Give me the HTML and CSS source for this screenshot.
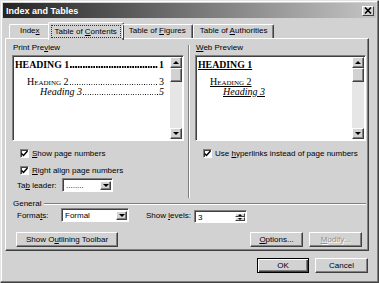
FILE: index.html
```html
<!DOCTYPE html>
<html lang="en">
<head>
    <meta charset="UTF-8">
    <title>Index and Tables</title>
    <link rel="stylesheet" href="styles.css">
</head>
<body>

<div class="dialog">
    <div class="titlebar">
        <span class="title">Index and Tables</span>
        <span class="close">
            <svg width="8" height="7" viewBox="0 0 8 7"><path d="M1 0.5 L7 6.5 M7 0.5 L1 6.5" stroke="#000" stroke-width="1.6"/></svg>
        </span>
    </div>

    <div class="tabs">
        <div class="tab first-tab">Inde<u>x</u></div>
        <div class="tab active"><span class="focus">Table of <u>C</u>ontents</span></div>
        <div class="tab">Table of <u>F</u>igures</div>
        <div class="tab">Table of <u>A</u>uthorities</div>
    </div>

    <div class="panel">
        <div class="columns">
            <div class="col">
                <div class="label">Print Pre<u>v</u>iew</div>
                <div class="preview">
                    <div class="doc">
                        <div class="entry h1"><span>HEADING 1</span><span class="leader"></span><span>1</span></div>
                        <div class="entry h2"><span>Heading 2</span><span class="leader"></span><span>3</span></div>
                        <div class="entry h3"><span>Heading 3</span><span class="leader"></span><span>5</span></div>
                    </div>
                    <div class="scrollbar">
                        <div class="sbtn"><span class="arrow-up"></span></div>
                        <div class="thumb"></div>
                        <div class="track"></div>
                        <div class="sbtn"><span class="arrow-down"></span></div>
                    </div>
                </div>
                <div class="check first">
                    <span class="box"><svg width="7" height="7" viewBox="0 0 7 7"><path d="M0.5 3.5 L2.5 5.5 L6.5 1" fill="none" stroke="#000" stroke-width="1.5"/></svg></span>
                    <span><u>S</u>how page numbers</span>
                </div>
                <div class="check">
                    <span class="box"><svg width="7" height="7" viewBox="0 0 7 7"><path d="M0.5 3.5 L2.5 5.5 L6.5 1" fill="none" stroke="#000" stroke-width="1.5"/></svg></span>
                    <span><u>R</u>ight align page numbers</span>
                </div>
                <div class="field-row leader-row">
                    <span class="field-label">Ta<u>b</u> leader:</span>
                    <div class="select leader-select">
                        <span class="value">........</span>
                        <span class="drop"><span class="arrow-down"></span></span>
                    </div>
                </div>
            </div>

            <div class="sep"></div>

            <div class="col">
                <div class="label"><u>W</u>eb Preview</div>
                <div class="preview">
                    <div class="doc web">
                        <div class="link h1">HEADING 1</div>
                        <div class="link h2">Heading 2</div>
                        <div class="link h3">Heading 3</div>
                    </div>
                    <div class="scrollbar">
                        <div class="sbtn"><span class="arrow-up"></span></div>
                        <div class="thumb"></div>
                        <div class="track"></div>
                        <div class="sbtn"><span class="arrow-down"></span></div>
                    </div>
                </div>
                <div class="check first">
                    <span class="box"><svg width="7" height="7" viewBox="0 0 7 7"><path d="M0.5 3.5 L2.5 5.5 L6.5 1" fill="none" stroke="#000" stroke-width="1.5"/></svg></span>
                    <span>Use <u>h</u>yperlinks instead of page numbers</span>
                </div>
            </div>
        </div>

        <div class="general">
            <span>General</span>
            <span class="rule"></span>
        </div>

        <div class="field-row formats-row">
            <span class="field-label formats-label">Forma<u>t</u>s:</span>
            <div class="select formats-select">
                <span class="value">Formal</span>
                <span class="drop"><span class="arrow-down"></span></span>
            </div>
            <span class="field-label levels-label">Show <u>l</u>evels:</span>
            <div class="spin">
                <span class="value">3</span>
                <span class="spin-btns">
                    <span class="spin-btn"><span class="arrow-up small"></span></span>
                    <span class="spin-btn"><span class="arrow-down small"></span></span>
                </span>
            </div>
        </div>

        <div class="button-row">
            <button class="btn outline-btn">Show O<u>u</u>tlining Toolbar</button>
            <button class="btn options-btn"><u>O</u>ptions...</button>
            <button class="btn disabled"><u>M</u>odify...</button>
        </div>
    </div>

    <div class="footer">
        <button class="btn default">OK</button>
        <button class="btn">Cancel</button>
    </div>
</div>

</body>
</html>
```

FILE: styles.css
```css
* {
    box-sizing: border-box;
}

body {
    margin: 0;
    font-family: 'Liberation Sans', Arial, sans-serif;
    font-size: 8px;
    color: #000;
    background-color: #fff;
}

.dialog {
    width: 379px;
    height: 283px;
    background-color: #d2d2d2;
    border: 1px solid;
    border-color: #e4e4e4 #404040 #404040 #e4e4e4;
    box-shadow: inset -1px -1px #808080, inset 1px 1px #fff;
    padding: 2px;
    display: flex;
    flex-direction: column;
}

/* title bar */
.titlebar {
    flex: none;
    height: 15px;
    background: linear-gradient(to right, #242424, #c4c4c4);
    display: flex;
    align-items: center;
    justify-content: space-between;
    padding: 0 2px 0 3px;
}

.title {
    color: #fff;
    font-weight: bold;
    font-size: 9px;
}

.close {
    width: 12px;
    height: 10px;
    background-color: #d2d2d2;
    border: 1px solid;
    border-color: #fff #404040 #404040 #fff;
    display: flex;
    align-items: center;
    justify-content: center;
}

/* tabs */
.tabs {
    flex: none;
    display: flex;
    align-items: flex-end;
    height: 16px;
    margin-top: 4px;
    padding-left: 6px;
    position: relative;
    z-index: 1;
}

.tab {
    height: 14px;
    line-height: 12px;
    padding: 0 6px;
    border: 1px solid;
    border-bottom: none;
    border-color: #fff #404040 #404040 #fff;
    border-radius: 2px 2px 0 0;
    box-shadow: inset -1px 0 #808080;
    white-space: nowrap;
}

.tab.first-tab {
    padding: 0 9px 0 10px;
}

.tab.active {
    height: 18px;
    margin: 0 -2px -2px;
    padding: 2px 2px 0;
    background-color: #d2d2d2;
}

.focus {
    display: inline-block;
    line-height: 11px;
    padding: 0 3px;
    border: 1px dotted #333;
}

/* panel */
.panel {
    flex: none;
    height: 213px;
    margin: 0 7px 0 2px;
    border: 1px solid;
    border-color: #fff #404040 #404040 #fff;
    box-shadow: inset -1px -1px #808080;
    padding: 4px 2px 3px 6px;
}

.columns {
    display: grid;
    grid-template-columns: 172px 11px 171px;
    height: 157px;
}

.sep {
    margin: 2px 0 2px 4px;
    width: 2px;
    border-left: 1px solid #808080;
    border-right: 1px solid #fff;
}

.label {
    height: 10px;
    line-height: 10px;
    padding-left: 1px;
    margin-bottom: 2px;
}

.preview {
    display: flex;
    height: 86px;
    background-color: #fff;
    border: 1px solid;
    border-color: #808080 #fff #fff #808080;
    box-shadow: inset 1px 1px #404040;
}

.doc {
    flex: 1;
    padding: 4px 6px 0 2px;
    font-family: 'Liberation Serif', 'Times New Roman', serif;
    font-size: 10px;
}

.entry {
    display: flex;
    align-items: baseline;
    white-space: nowrap;
    height: 10px;
    line-height: 10px;
}

.leader {
    flex: 1;
    height: 2px;
    margin: 0 1px;
    background-image: linear-gradient(to right, #000 1px, transparent 1px);
    background-size: 2.4px 1px;
    background-repeat: repeat-x;
    background-position: left bottom;
}

.h1 {
    font-weight: bold;
    height: 11px;
    margin-bottom: 6px;
}

.entry.h1 {
    font-size: 9.8px;
}

.entry.h1 .leader {
    background-image: linear-gradient(to right, #000 1.4px, transparent 1.4px);
    background-size: 2.6px 2px;
}

.h2 {
    padding-left: 12px;
    font-variant: small-caps;
}

.h3 {
    padding-left: 25px;
    font-style: italic;
}

.web .link {
    height: 10px;
    line-height: 10px;
    text-decoration: underline;
}

.web .h1 {
    height: 11px;
    font-size: 9.8px;
}

/* scrollbar */
.scrollbar {
    width: 12px;
    margin: 1px 1px 1px 0;
    display: flex;
    flex-direction: column;
    background-color: #e6e6e6;
}

.sbtn,
.thumb {
    height: 11px;
    background-color: #d2d2d2;
    border: 1px solid;
    border-color: #fff #404040 #404040 #fff;
    box-shadow: inset -1px -1px #808080;
    display: flex;
    align-items: center;
    justify-content: center;
}

.thumb {
    height: 14px;
}

.track {
    flex: 1;
}

.arrow-up,
.arrow-down {
    width: 0;
    height: 0;
    border-left: 3px solid transparent;
    border-right: 3px solid transparent;
}

.arrow-up {
    border-bottom: 3px solid #000;
}

.arrow-down {
    border-top: 3px solid #000;
}

.arrow-up.small,
.arrow-down.small {
    border-left-width: 2px;
    border-right-width: 2px;
    border-top-width: 2px;
    border-bottom-width: 2px;
}

.arrow-up.small {
    border-top: none;
}

.arrow-down.small {
    border-bottom: none;
}

/* checkboxes */
.check {
    display: flex;
    align-items: center;
    height: 12px;
    margin-top: 5px;
    padding-left: 8px;
    white-space: nowrap;
}

.check.first {
    margin-top: 6px;
}

.box {
    width: 9px;
    height: 9px;
    margin-right: 3px;
    background-color: #fff;
    border: 1px solid;
    border-color: #808080 #fff #fff #808080;
    box-shadow: inset 1px 1px #404040;
    display: flex;
    align-items: center;
    justify-content: center;
}

/* fields */
.field-row {
    display: flex;
    align-items: center;
    height: 14px;
    padding-left: 5px;
    white-space: nowrap;
}

.leader-row {
    margin-top: 2px;
}

.field-label {
    width: 45px;
}

.select,
.spin {
    display: flex;
    height: 14px;
    background-color: #fff;
    border: 1px solid;
    border-color: #808080 #fff #fff #808080;
    box-shadow: inset 1px 1px #404040;
    padding: 2px 1px 1px 2px;
}

.value {
    flex: 1;
    line-height: 9px;
    padding-left: 1px;
}

.drop {
    width: 11px;
    background-color: #d2d2d2;
    border: 1px solid;
    border-color: #fff #404040 #404040 #fff;
    box-shadow: inset -1px -1px #808080;
    display: flex;
    align-items: center;
    justify-content: center;
}

.leader-select {
    width: 51px;
}

.general {
    display: flex;
    align-items: center;
    height: 8px;
    line-height: 8px;
    padding-left: 1px;
}

.rule {
    flex: 1;
    height: 2px;
    margin-left: 3px;
    border-top: 1px solid #808080;
    border-bottom: 1px solid #fff;
}

.formats-label {
    width: 44px;
}

.formats-select {
    width: 68px;
}

.levels-label {
    width: 48px;
    margin-left: 17px;
}

.spin {
    width: 53px;
    height: 13px;
    margin-top: 2px;
}

.spin-btns {
    width: 10px;
    display: flex;
    flex-direction: column;
}

.spin-btn {
    flex: 1;
    background-color: #d2d2d2;
    border: 1px solid;
    border-color: #fff #404040 #404040 #fff;
    display: flex;
    align-items: center;
    justify-content: center;
}

/* buttons */
.button-row {
    display: flex;
    margin-top: 10px;
    padding: 0 4px;
}

.btn {
    height: 15px;
    width: 53px;
    padding: 0;
    font-family: inherit;
    font-size: 8px;
    color: #000;
    background-color: #d2d2d2;
    border: 1px solid;
    border-color: #fff #404040 #404040 #fff;
    box-shadow: inset -1px -1px #808080;
    white-space: nowrap;
}

.outline-btn {
    width: 102px;
}

.options-btn {
    margin-left: auto;
    margin-right: 6px;
}

.btn.disabled {
    color: #909090;
    text-shadow: 1px 1px #fff;
}

.footer {
    display: flex;
    justify-content: flex-end;
    gap: 6px;
    margin-top: 7px;
    padding-right: 8px;
}

.btn.default {
    width: 52px;
    border-color: #000;
    box-shadow: inset 1px 1px #fff, inset -1px -1px #404040, inset -2px -2px #808080;
}
```
